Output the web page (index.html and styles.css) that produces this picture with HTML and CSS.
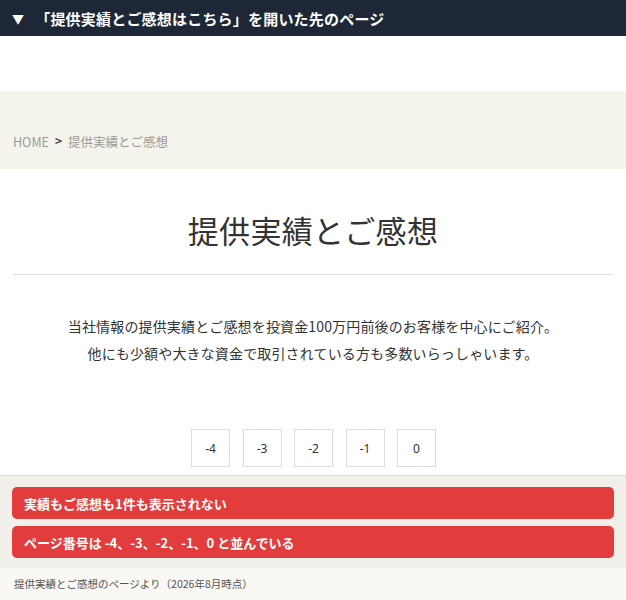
FILE: index.html
```html
<!DOCTYPE html>
<html lang="ja">
<head>
<meta charset="utf-8">
<link rel="stylesheet" href="styles.css">
</head>
<body>
<div class="topbar"><span class="tri">▼</span><span>「提供実績とご感想はこちら」を開いた先のページ</span></div>
<div class="spacer"></div>
<div class="crumbs"><span class="home">HOME</span><span class="sep">&gt;</span><span class="cur">提供実績とご感想</span></div>
<main class="content">
  <h1 class="title">提供実績とご感想</h1>
  <hr class="rule">
  <p class="lead">当社情報の提供実績とご感想を投資金100万円前後のお客様を中心にご紹介。<br>他にも少額や大きな資金で取引されている方も多数いらっしゃいます。</p>
  <div class="pager">
    <span class="pg">-4</span><span class="pg">-3</span><span class="pg">-2</span><span class="pg">-1</span><span class="pg">0</span>
  </div>
</main>
<section class="notes">
  <div class="note">実績もご感想も1件も表示されない</div>
  <div class="note">ページ番号は -4、-3、-2、-1、0 と並んでいる</div>
</section>
<footer class="caption">提供実績とご感想のページより（2026年8月時点）</footer>
</body>
</html>
```
FILE: styles.css
```css
html, body { margin: 0; padding: 0; }
body {
  width: 626px;
  height: 600px;
  overflow: hidden;
  background: #fff;
  font-family: "Noto Sans CJK JP", "Noto Sans", sans-serif;
  color: #333;
}
.topbar {
  height: 36px;
  background: #1e2735;
  color: #fff;
  font-weight: bold;
  font-size: 15px;
  display: flex;
  align-items: center;
  padding-left: 12px;
  box-sizing: border-box;
  letter-spacing: 0.2px;
}
.tri { font-size: 12px; margin-right: 11px; }
.spacer { height: 55px; }
.crumbs {
  height: 78px;
  background: #f4f4ec;
  box-sizing: border-box;
  padding: 41px 0 0 13px;
  font-size: 12.5px;
  color: #9a9a92;
  display: flex;
  align-items: flex-start;
}
.sep { color: #444; font-weight: bold; margin: 0 6px 0 6px; font-size: 12px; }
.content { padding: 0 13px; }
.title {
  margin: 38px 0 0;
  text-align: center;
  font-weight: normal;
  font-size: 31px;
  line-height: 46px;
  color: #333;
  letter-spacing: 0.3px;
}
.rule {
  margin: 21px 0 0;
  border: 0;
  border-top: 1px solid #ddd;
  height: 0;
}
.lead {
  margin: 38px 0 0;
  text-align: center;
  font-size: 14px;
  line-height: 27px;
  color: #333;
  letter-spacing: 0.15px;
}
.pager {
  display: flex;
  justify-content: center;
  gap: 12.5px;
  margin-top: 62px;
  padding-left: 1px;
}
.pg {
  width: 37px;
  height: 36px;
  border: 1px solid #ddd;
  display: flex;
  align-items: center;
  justify-content: center;
  font-size: 12px;
  color: #333;
  font-family: "Noto Sans", sans-serif;
}
.notes {
  position: absolute;
  left: 0;
  top: 475px;
  width: 626px;
  box-sizing: border-box;
  background: #f0efea;
  border-top: 1px solid #ddd6d0;
  padding: 11px 12px 10px 12px;
  display: flex;
  flex-direction: column;
  gap: 7px;
}
.note {
  background: #e23c3c;
  color: #fff;
  font-weight: bold;
  font-size: 13px;
  height: 32px;
  border-radius: 5px;
  display: flex;
  align-items: center;
  padding-left: 12px;
}
.caption {
  position: absolute;
  left: 0;
  top: 568px;
  width: 626px;
  height: 32px;
  box-sizing: border-box;
  background: #f9f8f4;
  padding-left: 14px;
  font-size: 10.5px;
  color: #555;
  display: flex;
  align-items: center;
  padding-bottom: 2px;
}
```
